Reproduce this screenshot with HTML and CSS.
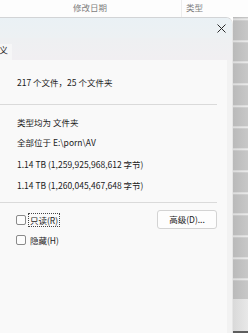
FILE: index.html
```html
<!DOCTYPE html>
<html lang="zh-CN">
<head>
<meta charset="utf-8">
<link rel="stylesheet" href="styles.css">
</head>
<body>
<div class="page">
  <div class="colhead">
    <div class="col-date">修改日期</div>
    <div class="col-type">类型</div>
  </div>
  <div class="stage">
    <div class="dialog">
      <div class="titlebar">
        <svg class="close" width="9" height="9" viewBox="0 0 9 9"><path d="M0.5 0.5 L8.5 8.5 M8.5 0.5 L0.5 8.5" stroke="#2b2b2b" stroke-width="1" fill="none"/></svg>
      </div>
      <div class="tabs"><div class="tab">义</div></div>
      <div class="body">
        <div class="content">
          <div class="row r1">217 个文件，25 个文件夹</div>
          <div class="sep s1"></div>
          <div class="row r2">类型均为 文件夹</div>
          <div class="row r3">全部位于 E:\porn\AV</div>
          <div class="row r4">1.14 TB (1,259,925,968,612 字节)</div>
          <div class="row r5">1.14 TB (1,260,045,467,648 字节)</div>
          <div class="sep s2"></div>
          <div class="attr">
            <label class="check"><span class="box"></span><span class="lbl focus">只读(R)</span></label>
            <div class="btn">高级(D)...</div>
          </div>
          <label class="check hidden"><span class="box"></span><span class="lbl">隐藏(H)</span></label>
        </div>
      </div>
    </div>
    <div class="behind">
      <div class="stripes"></div>
      <div class="lower"></div>
    </div>
  </div>
</div>
</body>
</html>
```
FILE: styles.css
```css
* { box-sizing: border-box; }
html, body { margin: 0; padding: 0; }
body {
  width: 248px;
  height: 333px;
  overflow: hidden;
  background: #ffffff;
  font-family: "Noto Sans CJK SC", "Noto Sans", sans-serif;
  font-size: 8.5px;
  color: #1b1b1b;
}
.page { width: 248px; height: 333px; display: flex; flex-direction: column; }
.colhead {
  height: 17px;
  display: flex;
  color: #7d7d7d;
  line-height: 14px;
  background: #fdfdfd;
}
.col-date { width: 181px; padding-left: 73px; }
.col-type { border-left: 1px solid #ececec; padding-left: 4px; }
.stage { flex: 1; display: flex; }
.dialog {
  width: 233px;
  display: flex;
  flex-direction: column;
  border-top: 1px solid #d2d4d6;
  border-top-right-radius: 7px;
  overflow: hidden;
  background: #f9f9f9;
  border-right: 1px solid #e6e6e6;
}
.titlebar {
  height: 20px;
  background: linear-gradient(#eaf1f5, #edf1f3);
  display: flex;
  justify-content: flex-end;
  align-items: center;
  padding-right: 6px;
}
.close { display: block; margin-top: 1px; }
.tabs {
  height: 22px;
  background: linear-gradient(#eef0f2, #f1eff2);
  display: flex;
  align-items: flex-end;
}
.tab {
  width: 12px;
  height: 16px;
  background: #f6f6f7;
  line-height: 13px;
  font-size: 9px;
  text-indent: -1px;
  overflow: hidden;
}
.body {
  flex: 1;
  background: linear-gradient(to right, #f9f9f9 227px, #f2f2f2 227px);
}
.content { width: 217px; padding-left: 17px; }
.row { line-height: 14px; height: 14px; white-space: nowrap; }
.r1 { margin-top: 15px; }
.sep { height: 1px; background: #dadada; margin-left: -17px; }
.s1 { margin-top: 15px; }
.r2 { margin-top: 10px; }
.r3 { margin-top: 6px; }
.r4 { margin-top: 8px; }
.r5 { margin-top: 7px; }
.s2 { margin-top: 10px; }
.attr {
  margin-top: 7px;
  height: 19px;
  display: flex;
  justify-content: space-between;
  align-items: center;
}
.check { display: flex; align-items: center; height: 14px; }
.hidden { margin-top: 4px; }
.box {
  width: 10px;
  height: 10px;
  border: 1px solid #8a8a8a;
  border-radius: 2px;
  background: #fcfcfc;
  margin-left: -1px;
  margin-right: 2px;
}
.lbl { line-height: 12px; padding: 0 1px; border: 1px solid transparent; }
.focus { border: 1px dotted #444; }
.btn {
  width: 60px;
  height: 19px;
  border: 1px solid #d3d3d3;
  border-radius: 3px;
  background: #fdfdfd;
  text-align: center;
  line-height: 17px;
}
.behind { flex: 1; display: flex; flex-direction: column; }
.stripes {
  height: 282px;
  background:
    linear-gradient(to right, rgba(0,0,0,0.05), rgba(255,255,255,0.06)),
    repeating-linear-gradient(to bottom, #c4c4c4 0, #c4c4c4 19.7px, #e8e8e8 19.7px, #e8e8e8 21.7px);
  background-position: 0 0, 0 3.3px;
}
.lower {
  flex: 1;
  background: linear-gradient(to right, #d9d9d9, #e8e8e8);
  border-bottom: 2px solid #5e5e5e;
}
```
